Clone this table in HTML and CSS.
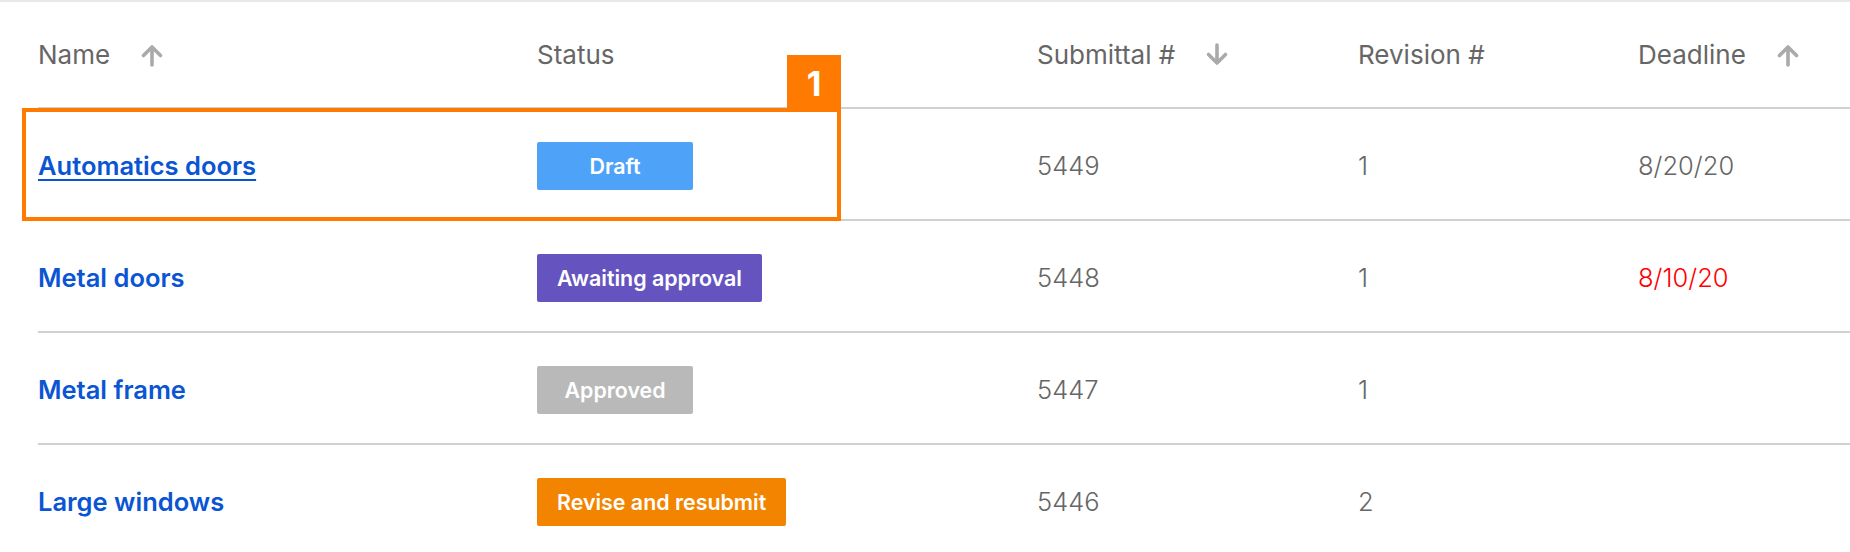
FILE: index.html
```html
<!DOCTYPE html>
<html lang="en">
<head>
<meta charset="utf-8">
<title>Submittals</title>
<link rel="stylesheet" href="styles.css">
</head>
<body>
<div class="page">
  <div class="table">
    <div class="row head">
      <div class="th">Name <svg class="sort" viewBox="0 0 24 24"><path d="M12 22V4M3.5 12.5L12 4l8.5 8.5"/></svg></div>
      <div class="th">Status</div>
      <div class="th">Submittal # <svg class="sort" viewBox="0 0 24 24"><path d="M12 2v18M3.5 11.5L12 20l8.5-8.5"/></svg></div>
      <div class="th">Revision #</div>
      <div class="th">Deadline <svg class="sort" viewBox="0 0 24 24"><path d="M12 22V4M3.5 12.5L12 4l8.5 8.5"/></svg></div>
    </div>
    <div class="row body-row first">
      <div class="td"><a class="name active" href="#">Automatics doors</a></div>
      <div class="td"><span class="badge draft">Draft</span></div>
      <div class="td num">5449</div>
      <div class="td num">1</div>
      <div class="td num">8/20/20</div>
      <div class="highlight"><span class="marker">1</span></div>
    </div>
    <div class="row body-row">
      <div class="td"><a class="name" href="#">Metal doors</a></div>
      <div class="td"><span class="badge awaiting">Awaiting approval</span></div>
      <div class="td num">5448</div>
      <div class="td num">1</div>
      <div class="td num late">8/10/20</div>
    </div>
    <div class="row body-row">
      <div class="td"><a class="name" href="#">Metal frame</a></div>
      <div class="td"><span class="badge approved">Approved</span></div>
      <div class="td num">5447</div>
      <div class="td num">1</div>
      <div class="td num"></div>
    </div>
    <div class="row body-row">
      <div class="td"><a class="name" href="#">Large windows</a></div>
      <div class="td"><span class="badge revise">Revise and resubmit</span></div>
      <div class="td num">5446</div>
      <div class="td num">2</div>
      <div class="td num"></div>
    </div>
  </div>
</div>
</body>
</html>
```

FILE: styles.css
```css
html, body {
  margin: 0;
  padding: 0;
  background: #ffffff;
}
body {
  font-family: Inter, Lato, "Open Sans", sans-serif;
  color: #666666;
  overflow: hidden;
}
.page {
  border-top: 2px solid #e8e8e8;
  padding-left: 38px;
}
.row {
  display: grid;
  grid-template-columns: 499px 500px 321px 280px 1fr;
  align-items: center;
  border-bottom: 2px solid #d0d0d0;
  position: relative;
}
.head {
  height: 105px;
}
.body-row {
  height: 107px;
  padding-top: 3px;
}
.th {
  display: flex;
  align-items: center;
  gap: 30px;
  font-size: 26px;
  font-weight: 400;
  color: #666666;
}
.sort {
  width: 24px;
  height: 24px;
  fill: none;
  stroke: #aaaaaa;
  stroke-width: 3.6;
  stroke-linecap: round;
  stroke-linejoin: round;
}
.td {
  font-size: 25.5px;
}
.num {
  font-weight: 300;
  color: #666666;
}
.late {
  color: #ff0000;
}
.name {
  color: #0a55d3;
  font-weight: 600;
  text-decoration: none;
}
.name.active {
  text-decoration: underline;
  text-decoration-thickness: 2px;
  text-underline-offset: 4px;
}
.badge {
  display: inline-flex;
  align-items: center;
  justify-content: center;
  box-sizing: border-box;
  min-width: 156px;
  height: 48px;
  padding: 0 20px;
  border-radius: 2px;
  color: #ffffff;
  font-size: 21.4px;
  font-weight: 600;
}
.draft { background: #4ea3f9; }
.awaiting { background: #6554c0; }
.approved { background: #b9b9b9; }
.revise { background: #f38400; }
.highlight {
  position: absolute;
  left: -16px;
  top: -1px;
  width: 819px;
  height: 113px;
  box-sizing: border-box;
  border: 4px solid #ff7a00;
  pointer-events: none;
}
.marker {
  position: absolute;
  right: -4px;
  top: -57px;
  width: 54px;
  height: 57px;
  background: #ff7a00;
  color: #ffffff;
  font-size: 34px;
  font-weight: 700;
  display: flex;
  align-items: center;
  justify-content: center;
}
```
